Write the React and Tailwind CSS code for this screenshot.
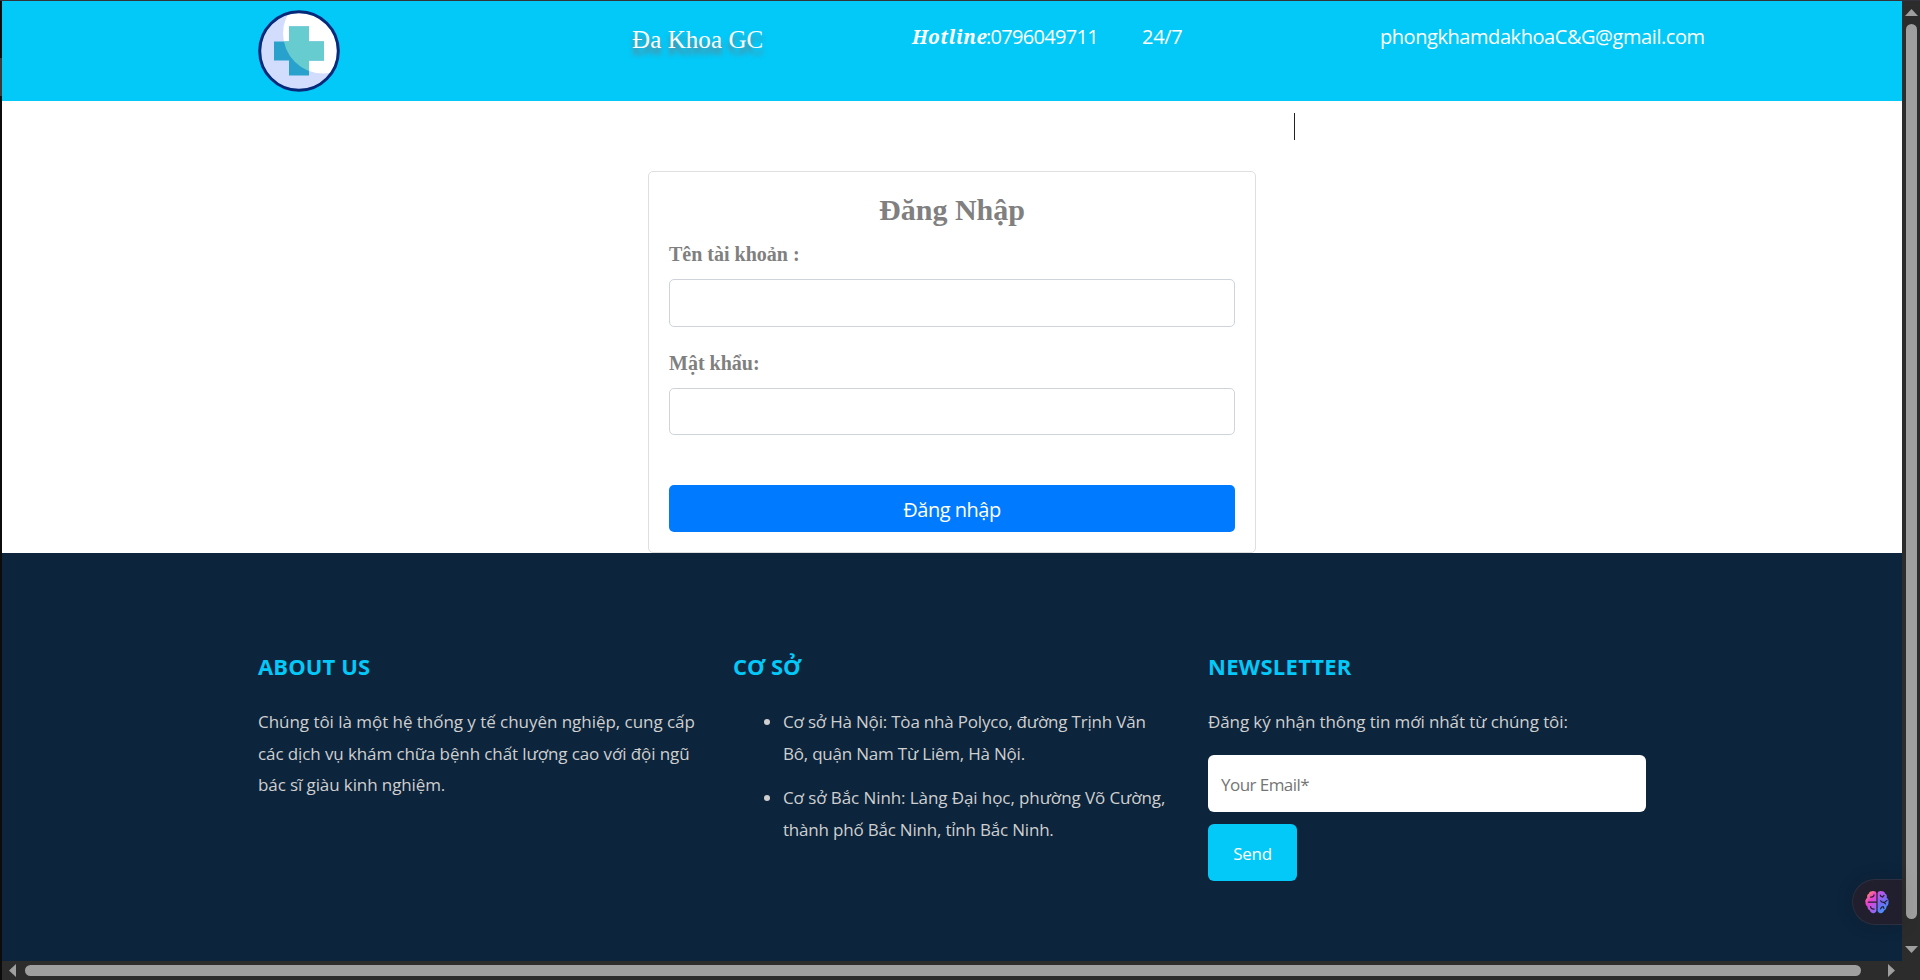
import React from "react";

function ClinicLogo() {
  return (
    <svg width="82" height="82" viewBox="0 0 82 82" aria-hidden="true">
      <defs>
        <clipPath id="disc"><circle cx="41" cy="41" r="38.5" /></clipPath>
        <clipPath id="shine"><circle cx="65" cy="23.5" r="40" /></clipPath>
      </defs>
      <circle cx="41" cy="41" r="38.5" fill="#d2dcfd" />
      <g clipPath="url(#disc)"><circle cx="65" cy="23.5" r="40" fill="#fff" /></g>
      <path d="M31 16.5h20v15h15v19H51v15H31v-15H16v-19h15z" fill="#28a1cd" />
      <path d="M31 16.5h20v15h15v19H51v15H31v-15H16v-19h15z" fill="#67cccf" clipPath="url(#shine)" />
      <circle cx="41" cy="41" r="39.3" fill="none" stroke="#06297a" strokeWidth="3" />
    </svg>
  );
}

function BrainIcon() {
  return (
    <svg width="24" height="24" viewBox="0 0 24 24" aria-hidden="true">
      <defs>
        <linearGradient id="brainLeft" x1="0.2" y1="0" x2="0.75" y2="1">
          <stop offset="0" stopColor="#ff9a3c" />
          <stop offset="0.22" stopColor="#f4689a" />
          <stop offset="0.42" stopColor="#ec3fd0" />
          <stop offset="1" stopColor="#8a6cf5" />
        </linearGradient>
        <linearGradient id="brainRight" x1="0.3" y1="0" x2="0.7" y2="1">
          <stop offset="0" stopColor="#c455e6" />
          <stop offset="0.5" stopColor="#6f6df5" />
          <stop offset="1" stopColor="#3b9dfb" />
        </linearGradient>
      </defs>
      <path d="M11.4 3.2C11 1.2 8.6.3 6.800 1.400 5.500 1.200 4.200 2.200 4 3.600 2.300 4.400 1.700 6.200 2.300 7.700.6 8.900 0 10.800.5 12.200c-.2 1.700.6 3.400 2 4.200-.1 1.800.8 3.400 2.400 4 .6 2.200 2.700 3.200 4.500 2.600 1.200-.3 2-1.300 2-2.400z" fill="url(#brainLeft)" />
      <path d="M12.600 3.200c.4-2 2.800-2.900 4.600-1.800 1.300-.2 2.600.8 2.800 2.200 1.700.8 2.300 2.600 1.700 4.100 1.700 1.200 2.300 3.100 1.800 4.500.2 1.700-.6 3.400-2 4.200.1 1.800-.8 3.400-2.400 4-.6 2.200-2.700 3.200-4.500 2.600-1.200-.3-2-1.300-2-2.400z" fill="url(#brainRight)" />
      <g fill="none" stroke="#211f2d" strokeWidth="1.200" strokeLinecap="round">
        <path d="M9 4.800c0 1.500-1.300 2.500-3.400 2.300M3.400 12.200h8M5.600 16.500c0 1.700 1.300 2.700 3.600 2.500" />
        <path d="M15.300 5.200c.2 1.200 1 1.800 2.200 1.800M17.500 7l1.500-1.600M15.600 10.800c.9 1.400 2.600 1.900 4.200 1.400l2.200-1.800M19 12.600l1.600 1.300M15.600 18.800c.3-1.500 1.200-2.100 2.600-2.100M18.200 16.700l.8 1.800" />
      </g>
    </svg>
  );
}

const headingClass = "text-[22px] leading-[29px] font-bold text-[#03c8f8] whitespace-nowrap";

export default function App() {
  return (
    <div className="flex h-[980px] w-[1920px] flex-col overflow-hidden bg-[#2c2c2c] font-['Open_Sans','Noto_Sans',sans-serif]">
      <div className="h-px shrink-0 bg-[#33333b]" />
      <div className="flex h-[960px] shrink-0">
        <div className="w-[2px] shrink-0 bg-[#0c0c0c] pt-[57px]">
          <div className="h-[38px] bg-[#3a3a3a]" />
        </div>

        <div className="relative flex w-[1900px] shrink-0 flex-col bg-white">
          <header className="flex h-[100px] shrink-0 items-start bg-[#03c9f8] pl-[256px] text-[20px] leading-[30px] whitespace-nowrap text-white">
            <div className="w-[374px] pt-[9px]"><ClinicLogo /></div>
            <div className="w-[280px] pt-[24px] font-['Liberation_Serif',serif] text-[25px] tracking-[0.080px] [text-shadow:0_6px_5px_rgba(128,108,108,0.850)]">
              Đa Khoa GC
            </div>
            <div className="flex w-[230px] pt-[21px]">
              <span className="w-[74px] font-['Noto_Serif','Liberation_Serif',serif] font-bold italic text-[19px] tracking-[0.500px]">Hotline</span>
              <span className="tracking-[-0.700px]">:0796049711</span>
            </div>
            <div className="w-[238px] pt-[21px] tracking-[-0.300px]">24/7</div>
            <div className="pt-[21px] tracking-[-0.440px]">phongkhamdakhoaC&amp;G@gmail.com</div>
          </header>

          <div className="h-[70px] shrink-0 pt-[12px] pl-[1292px]">
            <div className="h-[27px] w-px bg-[#222]" />
          </div>

          <form className="ml-[646px] flex h-[382px] w-[608px] shrink-0 flex-col rounded-[5px] border border-[#dfdfdf] px-5 pt-5 font-['Liberation_Serif',serif]">
            <h1 className="text-center text-[30px] leading-[36px] font-bold text-[#808080]">Đăng Nhập</h1>
            <label className="mt-[11px] text-[20px] leading-[30px] font-bold text-[#808080]">Tên tài khoản :</label>
            <input className="mt-[10px] h-12 w-full shrink-0 rounded-[5px] border border-[#ced4da]" />
            <label className="mt-[21px] text-[20px] leading-[30px] font-bold text-[#808080]">Mật khẩu:</label>
            <input className="mt-[10px] h-[47px] w-full shrink-0 rounded-[5px] border border-[#ced4da]" />
            <button type="button" className="mt-[50px] h-[47px] w-full shrink-0 rounded-[5px] bg-[#007bff] pt-[2px] font-['Open_Sans',sans-serif] text-[20px] leading-[30px] tracking-[-0.500px] text-white">
              Đăng nhập
            </button>
          </form>

          <footer className="flex grow bg-[#0c243c] pt-[99px] pl-[256px] text-[17px] leading-[31.500px] whitespace-nowrap text-[#cfcfcf]">
            <section className="w-[475px]">
              <h2 className={headingClass + " tracking-[0.100px]"}>ABOUT US</h2>
              <p className="mt-[25px]">
                <span className="tracking-[-0.040px]">Chúng tôi là một hệ thống y tế chuyên nghiệp, cung cấp</span><br />
                <span className="tracking-[-0.100px]">các dịch vụ khám chữa bệnh chất lượng cao với đội ngũ</span><br />
                <span className="tracking-[-0.100px]">bác sĩ giàu kinh nghiệm.</span>
              </p>
            </section>
            <section className="w-[475px]">
              <h2 className={headingClass}>CƠ SỞ</h2>
              <ul className="mt-[25px] flex flex-col gap-[13px] pl-[31px]">
                <li className="flex gap-[13px]">
                  <span className="mt-[13px] size-[6px] shrink-0 rounded-full bg-[#cfcfcf]" />
                  <span>
                    <span className="tracking-[-0.200px]">Cơ sở Hà Nội: Tòa nhà Polyco, đường Trịnh Văn</span><br />
                    <span className="tracking-[-0.210px]">Bô, quận Nam Từ Liêm, Hà Nội.</span>
                  </span>
                </li>
                <li className="flex gap-[13px]">
                  <span className="mt-[13px] size-[6px] shrink-0 rounded-full bg-[#cfcfcf]" />
                  <span>
                    <span className="tracking-[-0.090px]">Cơ sở Bắc Ninh: Làng Đại học, phường Võ Cường,</span><br />
                    <span className="tracking-[-0.200px]">thành phố Bắc Ninh, tỉnh Bắc Ninh.</span>
                  </span>
                </li>
              </ul>
            </section>
            <section className="w-[438px]">
              <h2 className={headingClass + " tracking-[0.300px]"}>NEWSLETTER</h2>
              <p className="mt-[25px] h-[49px] tracking-[-0.100px]">Đăng ký nhận thông tin mới nhất từ chúng tôi:</p>
              <input
                placeholder="Your Email*"
                className="block h-[57px] w-full rounded-[6px] bg-white pt-px pr-3 pl-[13px] tracking-[-0.550px] placeholder:text-[#757575]"
              />
              <button type="button" className="mt-3 block h-[57px] w-[89px] rounded-[6px] bg-[#03c9f8] pt-[2px] tracking-[-0.300px] text-white">
                Send
              </button>
            </section>
          </footer>

          <div className="absolute top-[878px] right-0 flex h-[46px] w-[50px] items-center rounded-l-[23px] border border-r-0 border-[#2b2f3f] bg-[#211f2d] pl-[12px] shadow-[0_0_18px_rgba(0,0,0,0.150)]">
            <BrainIcon />
          </div>
        </div>

        <div className="flex w-[18px] shrink-0 flex-col items-center bg-[#2c2c2c] pt-2">
          <svg width="13" height="7" viewBox="0 0 13 7" className="ml-px"><path d="M0 7 6.500 0 13 7z" fill="#9f9f9f" /></svg>
          <div className="mt-2 ml-px h-[895px] w-[11px] rounded-full bg-[#9f9f9f]" />
          <svg width="13" height="7" viewBox="0 0 13 7" className="mt-[27px] ml-px"><path d="M0 0 6.500 7 13 0z" fill="#9f9f9f" /></svg>
        </div>
      </div>

      <div className="flex grow">
        <div className="h-full w-[2px] bg-[#0c0c0c]" />
        <div className="flex h-full items-start pt-[4px] pl-[7px]">
          <svg width="7" height="13" viewBox="0 0 7 13" className="-mt-px"><path d="M7 0 0 6.500 7 13z" fill="#9f9f9f" /></svg>
          <div className="ml-[9px] h-[11px] w-[1836px] rounded-full bg-[#9f9f9f]" />
          <svg width="7" height="13" viewBox="0 0 7 13" className="-mt-px ml-[27px]"><path d="M0 0 7 6.500 0 13z" fill="#9f9f9f" /></svg>
        </div>
      </div>
    </div>
  );
}
